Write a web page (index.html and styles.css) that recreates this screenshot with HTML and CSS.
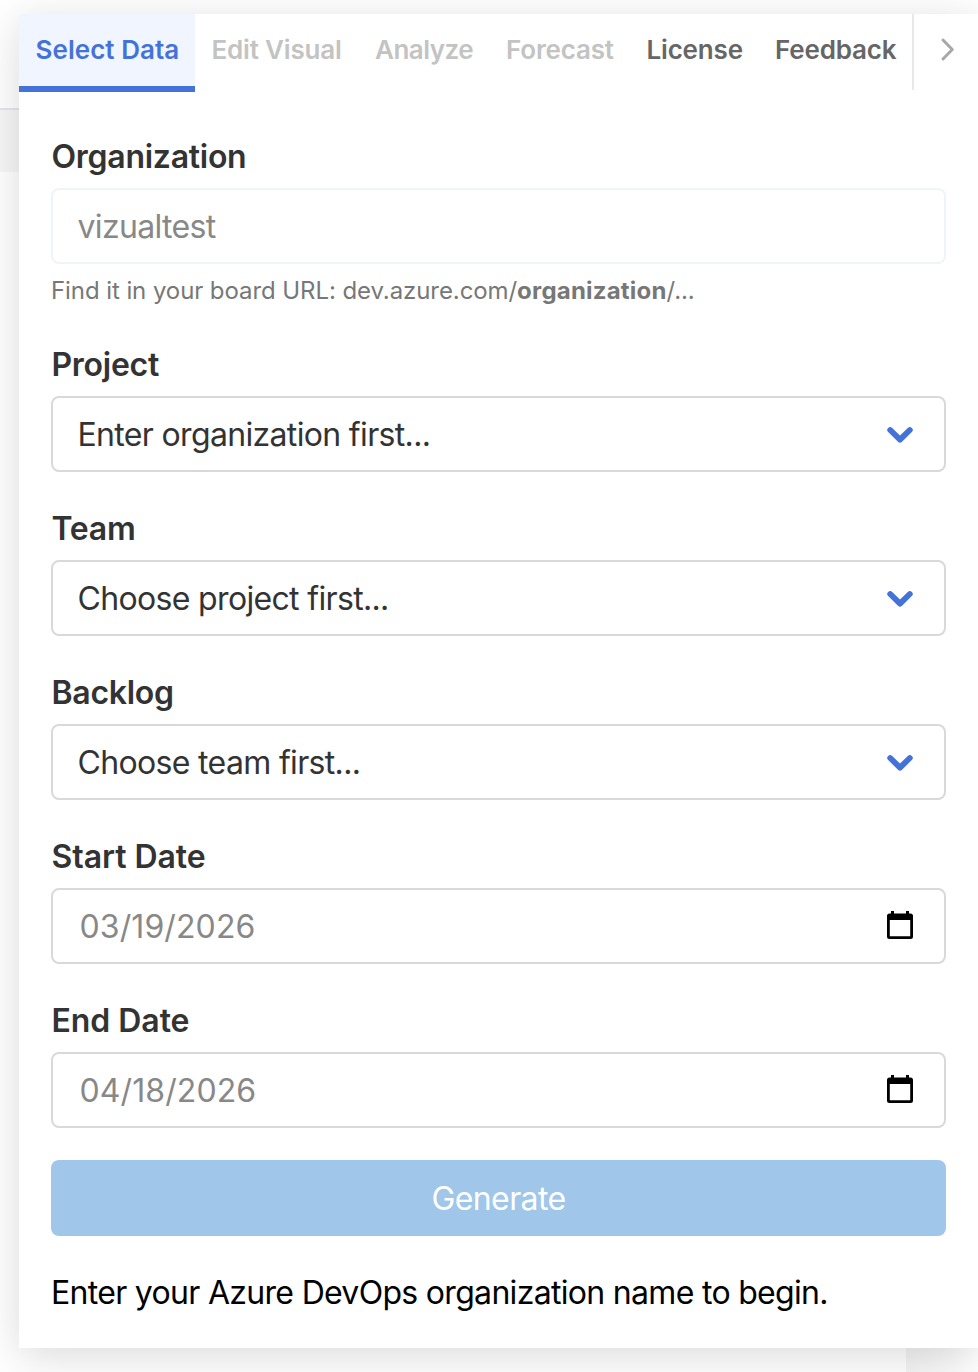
FILE: index.html
```html
<!DOCTYPE html>
<html lang="en">
<head>
<meta charset="UTF-8">
<meta name="viewport" content="width=device-width, initial-scale=1.0">
<title>Select Data</title>
<link rel="stylesheet" href="styles.css">
</head>
<body>

<div class="page-band"></div>
<div class="page-sheet"></div>

<div class="panel">
  <nav class="tabs">
    <a class="tab active">Select Data</a>
    <a class="tab disabled visual">Edit Visual</a>
    <a class="tab disabled analyze">Analyze</a>
    <a class="tab disabled forecast">Forecast</a>
    <a class="tab license">License</a>
    <a class="tab feedback">Feedback</a>
    <button class="tabs-next" aria-label="More tabs">
      <svg width="16" height="26" viewBox="0 0 16 26"><path d="M3 3 L12.3 12.5 L3 22" fill="none" stroke="#a8a8a8" stroke-width="3" stroke-linecap="round" stroke-linejoin="round"/></svg>
    </button>
  </nav>

  <form class="form">
    <div class="field">
      <label>Organization</label>
      <div class="control light"><span class="value muted">vizualtest</span></div>
      <p class="hint">Find it in your board URL: dev.azure.com/<b>organization</b>/...</p>
    </div>
    <div class="field">
      <label>Project</label>
      <div class="control">
        <span class="value">Enter organization first...</span>
        <svg class="chevron" width="26" height="18" viewBox="0 0 26 18"><path d="M3.2 4 L13 13.6 L22.8 4"/></svg>
      </div>
    </div>
    <div class="field">
      <label>Team</label>
      <div class="control">
        <span class="value">Choose project first...</span>
        <svg class="chevron" width="26" height="18" viewBox="0 0 26 18"><path d="M3.2 4 L13 13.6 L22.8 4"/></svg>
      </div>
    </div>
    <div class="field">
      <label>Backlog</label>
      <div class="control">
        <span class="value">Choose team first...</span>
        <svg class="chevron" width="26" height="18" viewBox="0 0 26 18"><path d="M3.2 4 L13 13.6 L22.8 4"/></svg>
      </div>
    </div>
    <div class="field">
      <label class="date-label">Start Date</label>
      <div class="control">
        <span class="value muted date">03/19/2026</span>
        <svg class="calendar" width="26" height="28" viewBox="0 0 26 28"><path fill-rule="evenodd" d="M4 0H7V2.5H19V0H22V2.5H23.5Q26 2.5 26 5V25.5Q26 28 23.5 28H2.5Q0 28 0 25.5V5Q0 2.5 2.5 2.5H4ZM2.8 9V25.3H23.2V9Z"/></svg>
      </div>
    </div>
    <div class="field">
      <label class="date-label">End Date</label>
      <div class="control">
        <span class="value muted date">04/18/2026</span>
        <svg class="calendar" width="26" height="28" viewBox="0 0 26 28"><path fill-rule="evenodd" d="M4 0H7V2.5H19V0H22V2.5H23.5Q26 2.5 26 5V25.5Q26 28 23.5 28H2.5Q0 28 0 25.5V5Q0 2.5 2.5 2.5H4ZM2.8 9V25.3H23.2V9Z"/></svg>
      </div>
    </div>
    <button type="button" class="generate" disabled>Generate</button>
    <p class="message">Enter your Azure DevOps organization name to begin.</p>
  </form>
</div>

</body>
</html>
```

FILE: styles.css
```css
* {
  box-sizing: border-box;
}
body {
  font-family: Inter, "Liberation Sans", sans-serif;
  margin: 0;
  height: 1372px;
  padding: 14px 0 24px 19px;
  background-color: #fff;
  position: relative;
  overflow: hidden;
}
/* page behind the panel */
.page-band {
  position: absolute;
  top: 108px;
  left: 0;
  width: 100%;
  height: 64px;
  background-color: #f7f7f7;
  border-top: 2px solid #e6e6ea;
}
.page-sheet {
  position: absolute;
  top: 1340px;
  left: 906px;
  right: 0;
  bottom: 0;
  background: linear-gradient(to right, #f3f3f3, #fff);
}
.panel {
  position: relative;
  width: 959px;
  height: 1334px;
  background-color: #fff;
  box-shadow: 0 8px 40px rgba(0, 0, 0, 0.15);
}
.tabs {
  display: flex;
  height: 78px;
}
.tab {
  height: 78px;
  padding: 0 0 6px 16.5px;
  font-size: 26px;
  font-weight: 600;
  line-height: 71px;
  white-space: nowrap;
  color: #666;
  letter-spacing: -0.18px;
}
.tab.active {
  width: 176px;
  color: #4372d9;
  background-color: #f0f5ff;
  border-bottom: 6px solid #4372d9;
  padding-bottom: 0;
  letter-spacing: 0.05px;
}
.tab.disabled {
  color: #c3c3c3;
}
.tab.visual {
  width: 163.5px;
}
.tab.analyze {
  width: 131px;
  letter-spacing: -0.5px;
}
.tab.forecast {
  width: 140.5px;
}
.tab.license {
  width: 128.5px;
}
.tab.feedback {
  width: 153.5px;
}
.tabs-next {
  flex: 1;
  height: 76px;
  padding: 0 0 5px 3px;
  background: none;
  border: none;
  border-left: 2px solid #e8e8e8;
  display: flex;
  align-items: center;
  justify-content: center;
}
.form {
  padding: 45px 32px 0;
}
.field {
  margin-bottom: 37px;
}
.field:last-of-type {
  margin-bottom: 32px;
}
.field label {
  display: block;
  padding-left: 0.5px;
  margin-bottom: 11px;
  font-size: 32px;
  font-weight: 600;
  line-height: 40px;
  letter-spacing: -0.27px;
  color: #333;
}
.field .date-label {
  letter-spacing: -0.05px;
}
.control {
  height: 76px;
  padding: 0 31px 0 24.5px;
  border: 2px solid #d9d9d9;
  border-radius: 8px;
  display: flex;
  align-items: center;
  justify-content: space-between;
}
.control.light {
  border-color: #f0f3f7;
}
.value {
  padding-top: 1px;
  font-size: 32px;
  letter-spacing: -0.66px;
  color: #333;
  white-space: nowrap;
}
.value.muted {
  color: #888;
}
.value.date {
  padding-left: 2px;
  letter-spacing: 0.1px;
}
.chevron {
  margin-top: 2px;
}
.chevron path {
  fill: none;
  stroke: #4372d9;
  stroke-width: 5.8;
  stroke-linecap: round;
  stroke-linejoin: round;
}
.calendar {
  margin-bottom: 3px;
}
.hint {
  margin: 11px 0 0;
  height: 33px;
  font-size: 24px;
  line-height: 31px;
  letter-spacing: -0.08px;
  color: #777;
  white-space: nowrap;
}
.hint b {
  letter-spacing: 0.2px;
}
.generate {
  display: block;
  width: 100%;
  height: 76px;
  padding-top: 2px;
  border: none;
  border-radius: 8px;
  background-color: #a0c6ea;
  color: #fff;
  font-family: inherit;
  font-size: 32px;
  letter-spacing: -0.6px;
}
.message {
  margin: 37px 0 0;
  font-size: 32px;
  line-height: 40px;
  letter-spacing: -0.69px;
  color: #000;
  white-space: nowrap;
}
```
